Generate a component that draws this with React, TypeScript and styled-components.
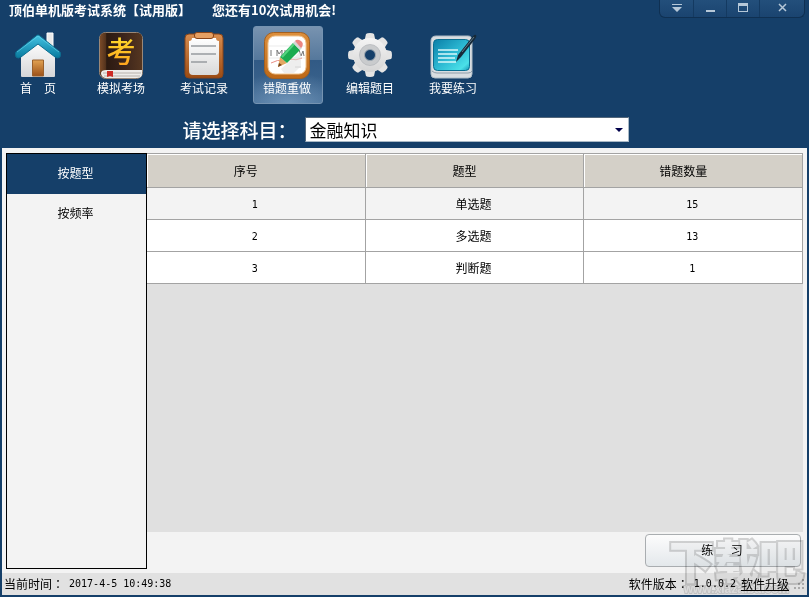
import React, { useState } from 'react';
import styled, { createGlobalStyle, css } from 'styled-components';

const navy = '#153f69';
const line = '#a3a3a3';

const GlobalStyle = createGlobalStyle`
  *, *::before, *::after { box-sizing: border-box; }
  html, body { margin: 0; padding: 0; }
  body {
    font-family: "Noto Sans CJK SC", "Liberation Sans", sans-serif;
    font-size: 12px;
    line-height: 16px;
    color: #000;
  }
  button, select { font: inherit; color: inherit; }
`;

const Window = styled.div`
  position: relative;
  display: flex;
  flex-direction: column;
  min-height: 100vh;
  padding: 0 2px 2px;
  background: ${navy};
`;

const Header = styled.header`
  display: flex;
  flex-direction: column;
  height: 148px;
  color: #fff;
`;

const TitleBar = styled.div`
  display: flex;
  justify-content: space-between;
  align-items: flex-start;
  height: 26px;
  padding: 0 2px 0 7px;
`;

const Title = styled.h1`
  display: flex;
  gap: 21px;
  margin: 0;
  padding-top: 1px;
  font-size: 13px;
  line-height: 18px;
  font-weight: 700;
  white-space: nowrap;
`;

const WindowControls = styled.div`
  display: flex;
  height: 18px;
  border: 1px solid #0f3052;
  border-top: 0;
  border-radius: 0 0 6px 6px;
  background: linear-gradient(#234f7b, #1a4470);
`;

const ControlButton = styled.button<{ $wide?: boolean }>`
  display: flex;
  align-items: center;
  justify-content: center;
  width: ${(p) => (p.$wide ? 45 : 33)}px;
  padding: 0 0 2px;
  border: 0;
  border-left: 1px solid #143a61;
  background: none;
  color: #b6c8d8;
  &:first-child { border-left: 0; }
`;

const Toolbar = styled.nav`
  display: flex;
  gap: 13px;
  padding-left: 2px;
`;

const ToolButton = styled.button<{ $active: boolean }>`
  display: flex;
  flex-direction: column;
  align-items: center;
  width: 70px;
  height: 78px;
  padding: 4px 2px 0 0;
  border: 1px solid transparent;
  border-radius: 3px;
  background: none;
  white-space: pre;
  color: #fff;
  ${(p) =>
    p.$active &&
    css`
      border-color: #7593b1;
      background:
        radial-gradient(ellipse 90% 40% at 50% 100%, rgba(150, 185, 218, 0.55), transparent),
        linear-gradient(#7893b0, #55789c 43%, #315a85 44%, #3f6790);
    `}
`;

const SubjectRow = styled.div`
  display: flex;
  justify-content: center;
  align-items: center;
  gap: 8px;
  padding: 13px 0 0 2px;
`;

const SubjectLabel = styled.label`
  font-size: 19px;
  line-height: 24px;
  font-weight: 500;
`;

const SelectWrap = styled.div`
  position: relative;
  flex: 0 1 324px;
`;

const SubjectSelect = styled.select`
  display: block;
  width: 100%;
  height: 25px;
  padding: 0 24px 0 4px;
  appearance: none;
  border: 1px solid #8b9aa8;
  border-color: #53677b #a9b9c6 #a9b9c6 #53677b;
  border-radius: 0;
  background: #fff;
  color: #000;
  font-size: 17px;
  line-height: 23px;
`;

const SelectArrow = styled.svg`
  position: absolute;
  right: 6px;
  top: 11px;
  pointer-events: none;
`;

const Content = styled.main`
  display: flex;
  flex: 1;
  padding: 5px 4px 4px;
  background: #f3f3f3;
`;

const Sidebar = styled.nav`
  flex: none;
  width: 141px;
  border: 1px solid #000;
`;

const SideItem = styled.button<{ $active: boolean }>`
  display: block;
  width: 100%;
  height: 40px;
  padding: 0 2px 2px 0;
  border: 0;
  background: ${(p) => (p.$active ? navy : 'transparent')};
  color: ${(p) => (p.$active ? '#fff' : '#000')};
`;

const Panel = styled.section`
  display: flex;
  flex: 1;
  flex-direction: column;
  min-width: 0;
`;

const TableArea = styled.div`
  flex: 1;
  background: #e0e0e0;
`;

const Table = styled.table`
  width: 100%;
  table-layout: fixed;
  border-spacing: 0;
  border-top: 1px solid ${line};
`;

const HeadCell = styled.th`
  height: 34px;
  padding: 0 20px 0 0;
  border-right: 1px solid ${line};
  border-bottom: 1px solid ${line};
  background: #d4d0c8;
  box-shadow: inset 1px 1px #fff;
  font-weight: 400;
`;

const Row = styled.tr<{ $current: boolean }>`
  background: ${(p) => (p.$current ? '#f3f3f3' : '#fff')};
`;

const Cell = styled.td`
  height: 32px;
  padding: 0 2px 0 0;
  border-right: 1px solid ${line};
  border-bottom: 1px solid ${line};
  text-align: center;
`;

const Num = styled.span`
  font-family: "DejaVu Sans Mono", monospace;
  font-size: 10px;
`;

const Actions = styled.div`
  display: flex;
  justify-content: flex-end;
  padding: 2px 2px 2px 0;
`;

const PracticeButton = styled.button`
  width: 156px;
  height: 33px;
  padding: 0 2px 2px 0;
  border: 1px solid #a9adb0;
  border-radius: 4px;
  background: linear-gradient(#fcfcfc, #f0f2f4 50%, #e3e8eb);
  white-space: pre;
`;

const StatusBar = styled.footer`
  display: flex;
  justify-content: space-between;
  align-items: center;
  height: 22px;
  padding: 0 2px;
  background: #e1e1e1;
  white-space: nowrap;
`;

const StatusGroup = styled.div`
  display: flex;
  align-items: center;
  gap: 5px;
`;

const CenteredColon = styled.span`
  font-family: "Noto Sans CJK TC", sans-serif;
`;

const UpgradeLink = styled.a`
  color: #000;
  text-decoration: underline;
`;

const Watermark = styled.div`
  position: absolute;
  right: 5px;
  bottom: 2px;
  display: flex;
  flex-direction: column;
  align-items: center;
  pointer-events: none;
  mix-blend-mode: multiply;
  opacity: 0.5;
  color: #f2f2f2;
  font-weight: 900;
  paint-order: stroke fill;
`;

const WatermarkName = styled.span`
  font-size: 45px;
  line-height: 46px;
  -webkit-text-stroke: 4px #ababab;
`;

const WatermarkUrl = styled.span`
  font-family: "Liberation Sans", sans-serif;
  font-size: 12px;
  line-height: 12px;
  -webkit-text-stroke: 2px #b8b8b8;
`;

const IconSvg = styled.svg`
  display: block;
  flex: none;
  margin-bottom: 1px;
  overflow: visible;
`;

function Icon({ children }: { children: React.ReactNode }) {
  return (
    <IconSvg width="48" height="48" viewBox="0 0 48 48" aria-hidden="true">
      {children}
    </IconSvg>
  );
}

const HomeIcon = () => (
  <Icon>
    <defs>
      <linearGradient id="roof" x2="0" y2="1">
        <stop stopColor="#45c4e4" />
        <stop offset="1" stopColor="#087a9e" />
      </linearGradient>
      <linearGradient id="wall" x2="0" y2="1">
        <stop stopColor="#fff" />
        <stop offset="1" stopColor="#d6d6d8" />
      </linearGradient>
      <linearGradient id="door" x2="0" y2="1">
        <stop stopColor="#e2a252" />
        <stop offset="1" stopColor="#9c5119" />
      </linearGradient>
    </defs>
    <path d="M33 2h6v18l-6-6z" fill="#e9e9e9" stroke="#fff" />
    <path d="M7 22 24 9l17 13v23q0 1-1 1H8q-1 0-1-1z" fill="url(#wall)" />
    <path d="M18.500 29h11v16h-11z" fill="url(#door)" stroke="#99602c" />
    <path d="M24 4q1 0 2 1l20 16q1 1 0 5-2 2-5 0L24 13 7 26q-3 2-5 0-1-4 0-5L22 5q1-1 2-1z" fill="url(#roof)" stroke="#0d6e91" />
    <path d="M3 21 24 5l21 16" fill="none" stroke="#65d5ec" opacity=".65" />
  </Icon>
);

const BookIcon = () => (
  <Icon>
    <defs>
      <linearGradient id="cover">
        <stop stopColor="#7a4a27" />
        <stop offset=".13" stopColor="#55341d" />
        <stop offset=".16" stopColor="#2c1a10" />
        <stop offset=".5" stopColor="#38221a" />
        <stop offset="1" stopColor="#553620" />
      </linearGradient>
      <linearGradient id="gold" x2="0" y2="1">
        <stop stopColor="#ffea2e" />
        <stop offset="1" stopColor="#ff9a1c" />
      </linearGradient>
    </defs>
    <rect x="2.500" y="1.500" width="43" height="46" rx="6" fill="#4a2b18" stroke="#9a8878" />
    <path d="M5 39h40v4q0 4-5 4H8q-4-1-4-5z" fill="#eeece9" />
    <path d="M6 42h38M7 45h36" stroke="#aaa49c" strokeWidth=".8" />
    <path d="M8 2h32q5 0 5 5v32H9q-4 0-6 3V7q0-5 5-5z" fill="url(#cover)" />
    <path d="M10 40h6v6l-3-1-3 1z" fill="#cc2b25" />
    <text x="24" y="32" fontSize="29" fontWeight="500" textAnchor="middle" fill="url(#gold)">考</text>
  </Icon>
);

const ClipboardIcon = () => (
  <Icon>
    <defs>
      <linearGradient id="board" x2="0" y2="1">
        <stop stopColor="#d88d4f" />
        <stop offset="1" stopColor="#9c4b13" />
      </linearGradient>
      <linearGradient id="paper" x2="0" y2="1">
        <stop stopColor="#fff" />
        <stop offset="1" stopColor="#d9d9d9" />
      </linearGradient>
    </defs>
    <rect x="5" y="3" width="38" height="44" rx="4" fill="url(#board)" stroke="#8a4519" />
    <path d="M12 7h24q0 3 3 3v30q0 4-4 4H13q-4 0-4-4V10q3 0 3-3z" fill="url(#paper)" />
    <rect x="14.500" y="1.500" width="19" height="6" rx="2.500" fill="#e6a063" stroke="#8a4519" />
    <path d="M11 15h25M11 23h25M11 31h16" stroke="#989ca0" strokeWidth="1.600" />
  </Icon>
);

const RedoIcon = () => (
  <Icon>
    <defs>
      <linearGradient id="frame" x2="0" y2="1">
        <stop stopColor="#dd8f3c" />
        <stop offset="1" stopColor="#bd6817" />
      </linearGradient>
    </defs>
    <rect x="1.500" y="1.500" width="45" height="46" rx="9" fill="url(#frame)" stroke="#a4601f" />
    <rect x="5" y="5" width="38" height="38" rx="7" fill="#fff" stroke="#f0c48f" />
    <path d="M6 15h36M6 27h36" stroke="#e6e6e6" strokeWidth=".8" />
    <path d="M8 19v6M14 25v-6l2 4 3-4v6M22 19v6M36 19l2 6 2-5 1 5" fill="none" stroke="#777" />
    <path d="M8 32q6-4 14-2M27 28q6 2 12-1" fill="none" stroke="#e98f88" />
    <path d="M32 36h6" stroke="#ccc" />
    <path d="m18 38 20-18v15l-7 7H21z" fill="#ddd" opacity=".5" />
    <path d="m17 26 7 6-9 4z" fill="#e3a863" />
    <path d="m16 32 3 2-4 2z" fill="#74411b" />
    <path d="m17 26 13-14 7 7-13 13z" fill="#1cab50" />
    <path d="m19 26 12-13" stroke="#56d380" strokeWidth="2" />
    <path d="m30 12 2-2 7 7-2 2z" fill="#d5d5d5" />
    <path d="m32 10 1-1q2-1 5 1t1 6l-1 1z" fill="#eb8582" />
  </Icon>
);

const GearIcon = () => (
  <Icon>
    <defs>
      <linearGradient id="gear" x2="0" y2="1">
        <stop stopColor="#f4f4f4" />
        <stop offset="1" stopColor="#d5d5d5" />
      </linearGradient>
    </defs>
    <g fill="#e4e4e4">
      {[0, 45, 90, 135, 180, 225, 270, 315].map((angle) => (
        <path key={angle} transform={`rotate(${angle} 24 24)`} d="m18 12 2-9q1-1 4-1t4 1l2 9z" />
      ))}
    </g>
    <circle cx="24" cy="24" r="17" fill="url(#gear)" />
    <circle cx="24" cy="24" r="10.500" fill="#c9cbcd" stroke="#b6b9bc" strokeWidth=".8" />
    <circle cx="24" cy="24" r="5.500" fill={navy} stroke="#9fa9b2" />
  </Icon>
);

const TabletIcon = () => (
  <Icon>
    <defs>
      <linearGradient id="screen" x2="1" y2="1">
        <stop stopColor="#0b7fa8" />
        <stop offset=".5" stopColor="#2bb8d2" />
        <stop offset=".85" stopColor="#4be0e8" />
        <stop offset="1" stopColor="#1593b4" />
      </linearGradient>
    </defs>
    <path d="M7 5h32q4 0 4 5v33q0 4-4 4H6q-4 0-4-4V10q0-5 5-5z" fill="#d8dde1" stroke="#aebcc6" />
    <path d="M3 40q2 2 5 2h31q3 0 4-2" fill="none" stroke="#8f9da9" />
    <rect x="4.500" y="8.500" width="36" height="31" rx="4" fill="url(#screen)" stroke="#0a6f91" />
    <path d="M9 19h20M9 23h19M9 27h17M9 31h18" stroke="#d7f8fa" strokeWidth="1.600" />
    <path d="m27 31 2-7L44 5q2-2 3-1t-1 4L32 26z" fill="#172a39" />
    <path d="M33 21 45 6" stroke="#607989" />
  </Icon>
);

const tools = [
  { label: '首　页', icon: HomeIcon },
  { label: '模拟考场', icon: BookIcon },
  { label: '考试记录', icon: ClipboardIcon },
  { label: '错题重做', icon: RedoIcon },
  { label: '编辑题目', icon: GearIcon },
  { label: '我要练习', icon: TabletIcon },
];

const rows = [
  { id: 1, type: '单选题', count: 15 },
  { id: 2, type: '多选题', count: 13 },
  { id: 3, type: '判断题', count: 1 },
];

export default function App() {
  const [tool, setTool] = useState('错题重做');
  const [group, setGroup] = useState('按题型');
  const [current, setCurrent] = useState(1);

  return (
    <>
      <GlobalStyle />
      <Window>
        <Header>
          <TitleBar>
            <Title>
              <span>顶伯单机版考试系统【试用版】</span>
              <span>您还有10次试用机会!</span>
            </Title>
            <WindowControls>
              <ControlButton aria-label="菜单">
                <svg width="10" height="8" viewBox="0 0 10 8"><path d="M0 0h10v1H0zM0 3h10L5 8z" fill="currentColor" /></svg>
              </ControlButton>
              <ControlButton aria-label="最小化">
                <svg width="9" height="8" viewBox="0 0 9 8"><path d="M0 6h9v2H0z" fill="currentColor" /></svg>
              </ControlButton>
              <ControlButton aria-label="最大化">
                <svg width="10" height="9" viewBox="0 0 10 9"><path d="M0 0h10v9H0zM1 3v5h8V3z" fillRule="evenodd" fill="currentColor" /></svg>
              </ControlButton>
              <ControlButton aria-label="关闭" $wide>
                <svg width="9" height="9" viewBox="0 0 9 9"><path d="m1 1 7 7M8 1 1 8" stroke="currentColor" strokeWidth="1.500" /></svg>
              </ControlButton>
            </WindowControls>
          </TitleBar>
          <Toolbar>
            {tools.map(({ label, icon: ToolIcon }) => (
              <ToolButton key={label} $active={label === tool} onClick={() => setTool(label)}>
                <ToolIcon />
                {label}
              </ToolButton>
            ))}
          </Toolbar>
          <SubjectRow>
            <SubjectLabel htmlFor="subject">请选择科目：</SubjectLabel>
            <SelectWrap>
              <SubjectSelect id="subject">
                <option>金融知识</option>
              </SubjectSelect>
              <SelectArrow width="8" height="4" viewBox="0 0 8 4">
                <path d="M0 0h8L4 4z" fill="#00004a" />
              </SelectArrow>
            </SelectWrap>
          </SubjectRow>
        </Header>

        <Content>
          <Sidebar>
            {['按题型', '按频率'].map((name) => (
              <SideItem key={name} $active={name === group} onClick={() => setGroup(name)}>
                {name}
              </SideItem>
            ))}
          </Sidebar>
          <Panel>
            <TableArea>
              <Table>
                <thead>
                  <tr>
                    <HeadCell scope="col">序号</HeadCell>
                    <HeadCell scope="col">题型</HeadCell>
                    <HeadCell scope="col">错题数量</HeadCell>
                  </tr>
                </thead>
                <tbody>
                  {rows.map((row) => (
                    <Row key={row.id} $current={row.id === current} onClick={() => setCurrent(row.id)}>
                      <Cell><Num>{row.id}</Num></Cell>
                      <Cell>{row.type}</Cell>
                      <Cell><Num>{row.count}</Num></Cell>
                    </Row>
                  ))}
                </tbody>
              </Table>
            </TableArea>
            <Actions>
              <PracticeButton>{'练　  习'}</PracticeButton>
            </Actions>
          </Panel>
        </Content>

        <StatusBar>
          <StatusGroup>
            <span>当前时间<CenteredColon>：</CenteredColon></span>
            <Num>2017-4-5 10:49:38</Num>
          </StatusGroup>
          <StatusGroup>
            <span>软件版本<CenteredColon>：</CenteredColon></span>
            <Num>1.0.0.2</Num>
            <UpgradeLink href="#upgrade">软件升级</UpgradeLink>
            <svg width="11" height="11" viewBox="0 0 11 11" aria-hidden="true">
              <path d="M8 0h2v2H8zM4 4h2v2H4zM8 4h2v2H8zM0 8h2v2H0zM4 8h2v2H4zM8 8h2v2H8z" fill="#aaa" />
            </svg>
          </StatusGroup>
        </StatusBar>

        <Watermark>
          <WatermarkName>下载吧</WatermarkName>
          <WatermarkUrl>www.xiazaiba.com</WatermarkUrl>
        </Watermark>
      </Window>
    </>
  );
}
